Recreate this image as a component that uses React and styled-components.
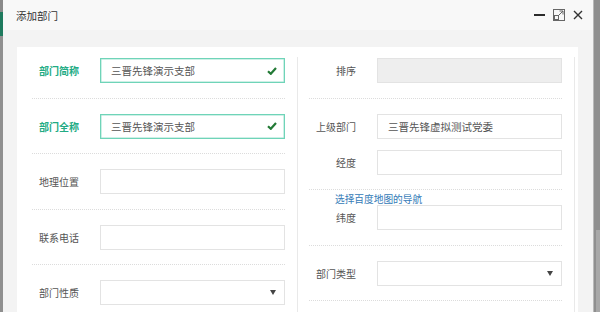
import React from 'react';
import styled, { createGlobalStyle } from 'styled-components';

const GlobalStyle = createGlobalStyle`
    html, body {
        margin: 0;
        padding: 0;
        background: #9b9b9b;
        font-family: "Noto Sans CJK SC", "Noto Sans", sans-serif;
    }
`;

const Screen = styled.div`
    display: flex;
    width: 600px;
    height: 312px;
    overflow: hidden;
`;
const LeftEdge = styled.div`
    width: 3px;
    background: linear-gradient(#8a8a8a 0 12px, #1f7a5e 12px 36px, #8f8f8f 36px);
`;
const RightEdge = styled.div`
    width: 7px;
    background: linear-gradient(to right, #b9b9b9 0 1px, #8f8f8f 1px);
    display: flex;
    flex-direction: column;
    &::after {
        content: "";
        margin-top: 230px;
        flex: 1;
        margin-left: 3px;
        background: #a8a8a8;
    }
`;
const Dialog = styled.div`
    flex: 1;
    display: flex;
    flex-direction: column;
    background: #f3f3f3;
`;
const TitleBar = styled.div`
    height: 30px;
    flex: none;
    display: flex;
    align-items: center;
    padding: 0 10px 0 13px;
    background: #f8f8f8;
    font-size: 10.5px;
    color: #333;
`;
const Title = styled.div`
    flex: 1;
`;
const Tools = styled.div`
    display: flex;
    align-items: center;
    gap: 8px;
`;
const Body = styled.div`
    padding: 17px 15px 0 14px;
    flex: 1;
    display: flex;
`;
const Card = styled.div`
    flex: 1;
    background: #fff;
    padding: 10px 3px 0 0;
    display: flex;
`;
const Column = styled.div`
    width: ${p => p.$w}px;
    padding: 1px 12px 0 ${p => p.$pl}px;
    border-right: 1px solid #e9e9e9;
    box-sizing: border-box;
`;
const Group = styled.div`
    display: flex;
    flex-direction: column;
    gap: 11px;
    padding: ${p => p.$first ? '0' : '15px'} 0 14.5px;
    border-bottom: 1px dotted #dcdcdc;
`;
const Field = styled.div`
    display: flex;
    align-items: center;
`;
const Label = styled.label`
    width: 47px;
    margin-right: 21px;
    text-align: right;
    font-size: 10px;
    white-space: nowrap;
    color: ${p => p.$ok ? '#22ab84' : '#555'};
    font-weight: ${p => p.$ok ? 600 : 400};
`;
const Input = styled.div`
    flex: 1;
    height: 25px;
    box-sizing: border-box;
    display: flex;
    align-items: center;
    justify-content: space-between;
    padding: 0 7px 0 10px;
    font-size: 10.5px;
    color: #555;
    background: ${p => p.$disabled ? '#eeeeee' : '#fff'};
    border: 1px solid ${p => p.$ok ? '#6fd4b8' : '#e3e3e3'};
    box-shadow: ${p => p.$ok ? 'inset 0 0 0 0.5px #9de2cf' : 'none'};
`;
const MapLink = styled.a`
    display: block;
    height: 14px;
    line-height: 14px;
    margin: -13px 0 -12px 26px;
    font-size: 9.7px;
    color: #337ab7;
    text-decoration: none;
`;

const Check = () => (
    <svg width="10" height="8" viewBox="0 0 10 8">
        <polyline points="1,4.2 3.8,6.8 9,1" fill="none" stroke="#237a36" strokeWidth="2.2" />
    </svg>
);
const Caret = () => (
    <svg width="6" height="5" viewBox="0 0 6 5" style={{ marginLeft: 'auto', marginRight: '1px' }}>
        <polygon points="0,0 6,0 3,5" fill="#444" />
    </svg>
);

const Min = () => (
    <svg width="11" height="4" viewBox="0 0 11 4"><rect x="0" y="1" width="11" height="2" fill="#2b2b2b" /></svg>
);
const Max = () => (
    <svg width="12" height="12" viewBox="0 0 12 12">
        <rect x="0.5" y="0.5" width="11" height="11" fill="none" stroke="#666" />
        <rect x="1.5" y="6.5" width="4" height="4" fill="none" stroke="#666" />
        <path d="M5.5 6.5 L10 2 M6.5 2 H10 V5.5" fill="none" stroke="#666" />
    </svg>
);
const Close = () => (
    <svg width="10" height="10" viewBox="0 0 10 10">
        <path d="M1 1 L9 9 M9 1 L1 9" stroke="#333" strokeWidth="1.4" />
    </svg>
);

const Row = ({ label, value, ok, select, disabled }) => (
    <Field>
        <Label $ok={ok}>{label}</Label>
        <Input $ok={ok} $disabled={disabled}>
            <span>{value}</span>
            {ok && <Check />}
            {select && <Caret />}
        </Input>
    </Field>
);

export default function App() {
    return (
        <Screen>
            <GlobalStyle />
            <LeftEdge />
            <Dialog>
                <TitleBar>
                    <Title>添加部门</Title>
                    <Tools><Min /><Max /><Close /></Tools>
                </TitleBar>
                <Body>
                    <Card>
                        <Column $w={281} $pl={15}>
                            <Group $first><Row ok label="部门简称" value="三晋先锋演示支部" /></Group>
                            <Group><Row ok label="部门全称" value="三晋先锋演示支部" /></Group>
                            <Group><Row label="地理位置" /></Group>
                            <Group><Row label="联系电话" /></Group>
                            <Group><Row select label="部门性质" /></Group>
                        </Column>
                        <Column $w={277} $pl={11}>
                            <Group $first><Row disabled label="排序" /></Group>
                            <Group>
                                <Row label="上级部门" value="三晋先锋虚拟测试党委" />
                                <Row label="经度" />
                            </Group>
                            <Group>
                                <MapLink>选择百度地图的导航</MapLink>
                                <Row label="纬度" />
                            </Group>
                            <Group><Row select label="部门类型" /></Group>
                        </Column>
                    </Card>
                </Body>
            </Dialog>
            <RightEdge />
        </Screen>
    );
}
